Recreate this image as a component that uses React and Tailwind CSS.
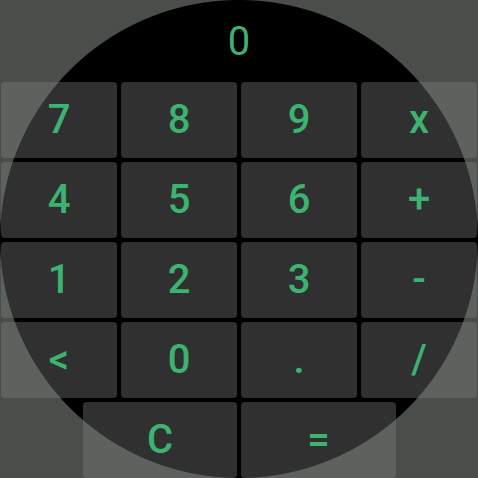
const rows = [
  ["7", "8", "9", "x"],
  ["4", "5", "6", "+"],
  ["1", "2", "3", "-"],
  ["<", "0", ".", "/"],
];

function Key({ label, className = "" }) {
  return (
    <button
      type="button"
      className={`flex items-center justify-center rounded-[4px] bg-[#303030] text-[40px] font-medium leading-none text-[#3cb371] ${className}`}
    >
      {label}
    </button>
  );
}

export default function App() {
  return (
    <div
      className="relative h-[478px] w-[478px] overflow-hidden bg-black"
      style={{ fontFamily: "Roboto, 'Noto Sans', sans-serif" }}
    >
      <div className="flex h-[82px] items-center justify-center pt-[2px] text-[40px] leading-none text-[#3cb371]">
        0
      </div>

      <div className="flex flex-col gap-[4px] px-[1px]">
        {rows.map((row, i) => (
          <div key={i} className="grid h-[76px] grid-cols-4 gap-[4px]">
            {row.map((k) => (
              <Key key={k} label={k} />
            ))}
          </div>
        ))}
        <div className="flex h-[76px] gap-[4px] pl-[82px]">
          <Key label="C" className="w-[154px]" />
          <Key label="=" className="w-[155px]" />
        </div>
      </div>

      {/* round screen mask */}
      <div className="pointer-events-none absolute inset-0 bg-[radial-gradient(circle_at_239px_239px,transparent_238.5px,rgba(124,130,124,0.6)_239.5px)]" />
    </div>
  );
}
